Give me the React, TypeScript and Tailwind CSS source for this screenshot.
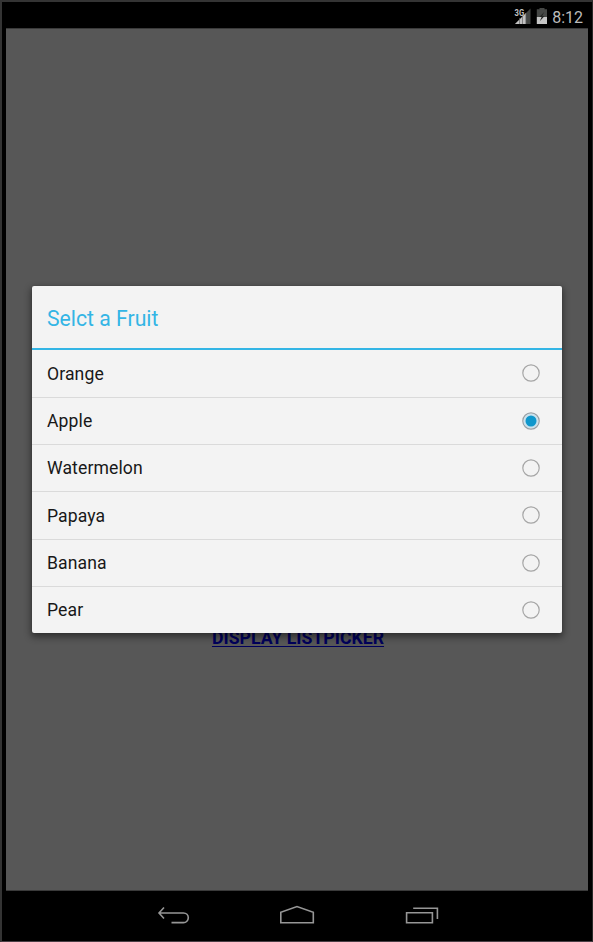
const fruits = [
  { name: "Orange", row: "h-12" },
  { name: "Apple", row: "h-[47px]" },
  { name: "Watermelon", row: "h-[47px]" },
  { name: "Papaya", row: "h-12" },
  { name: "Banana", row: "h-[47px]" },
  { name: "Pear", row: "h-[46px]" },
];

function Radio({ checked }: { checked: boolean }) {
  return (
    <svg className="mb-px" width="20" height="20" viewBox="0 0 20 20" fill="none">
      {checked && <circle cx="10" cy="10" r="7.5" fill="#c9e2ee" />}
      <circle cx="10" cy="10" r="8.2" stroke={checked ? "#98a0a6" : "#a6a6a6"} strokeWidth="1.2" />
      {checked && <circle cx="10" cy="10" r="5.5" fill="#0f97cc" />}
    </svg>
  );
}

function StatusBar() {
  return (
    <header className="flex h-[26px] items-start justify-end pr-[9px]">
      <svg className="mt-[5px]" width="36" height="20" viewBox="0 0 36 20">
        <path d="M16.5 1.5v15.5H1z" fill="#444644" />
        <path d="M12 6v11H1z" fill="#c2c2c2" />
        <path d="M5.5 11v6M8.5 8v9M11.8 6v11" stroke="#666" strokeWidth=".7" />
        <path d="M0 1h10.5v5.5L8.5 9H0z" fill="#000" />
        <text x="0.6" y="8.5" fontSize="8.6" fontWeight="700" fontFamily="Roboto, sans-serif" fill="#c2c2c2" textLength="9.6" lengthAdjust="spacingAndGlyphs">3G</text>
        <path d="M25.5 2.2V1h5v1.2H33V10H22.8V2.2z" fill="#454745" />
        <path d="M22.8 10H33v7H22.8z" fill="#c6c6c6" />
        <path d="M30.2 5l-5 5h2.4l-1.8 4.3 4.8-5.2h-2.3z" fill="#242624" />
      </svg>
      <span className="mt-[6px] w-[33px] text-right text-base leading-5 text-[#bcbcbc]">8:12</span>
    </header>
  );
}

function NavBar() {
  return (
    <nav className="flex h-[50px] items-center justify-center pl-[6px]">
      <svg width="320" height="50" viewBox="140 891 320 50" fill="none" stroke="#969696" strokeWidth="1.6">
        <path d="M164 907.5L159 913l5 5.5M159 913h24.5a4.8 4.8 0 0 1 0 9.6H171.5" />
        <path d="M280.8 922.8V912.2L297 906.5l16.3 5.7v10.6z" />
        <path d="M406.6 912.8H432.4v10H406.6zM413.2 908.2H437.4v10.8" />
      </svg>
    </nav>
  );
}

function ListPicker() {
  return (
    <section
      role="dialog"
      className="absolute left-[26px] top-[257px] w-[530px] overflow-hidden rounded-[2px] bg-[#f3f3f3] shadow-[0_3px_7px_1px_rgba(0,0,0,0.45),0_0_1px_0_rgba(0,0,0,0.3)]"
    >
      <h1 className="flex h-16 items-center border-b-2 border-[#33b5e5] pl-[15px] pt-[3px] text-[21.2px] font-normal text-[#33b5e5]">
        Selct a Fruit
      </h1>
      <ul>
        {fruits.map((fruit) => (
          <li
            key={fruit.name}
            className={`flex items-center justify-between border-b border-[#dadada] pl-[15px] pr-[21px] text-[17.6px] tracking-[0.1px] text-[#181818] last:border-b-0 ${fruit.row}`}
          >
            <span className="pt-px">{fruit.name}</span>
            <Radio checked={fruit.name === "Apple"} />
          </li>
        ))}
      </ul>
    </section>
  );
}

export default function App() {
  return (
    <div className="flex h-[942px] w-[593px] flex-col border-l-2 border-t-2 border-b border-r border-b-[#493f45] border-l-[#343434] border-r-[#292929] border-t-[#343434] bg-black font-['Roboto',sans-serif]">
      <StatusBar />
      <main className="relative ml-1 mr-[4px] flex h-[863px] flex-col items-center border-y border-y-[#3a3a3a] bg-[#575757] pl-[2px] pt-[597px]">
        <a className="text-[17.7px] font-bold leading-6 text-[#00005b] underline decoration-1 underline-offset-2">
          DISPLAY LISTPICKER
        </a>
        <ListPicker />
      </main>
      <NavBar />
    </div>
  );
}
